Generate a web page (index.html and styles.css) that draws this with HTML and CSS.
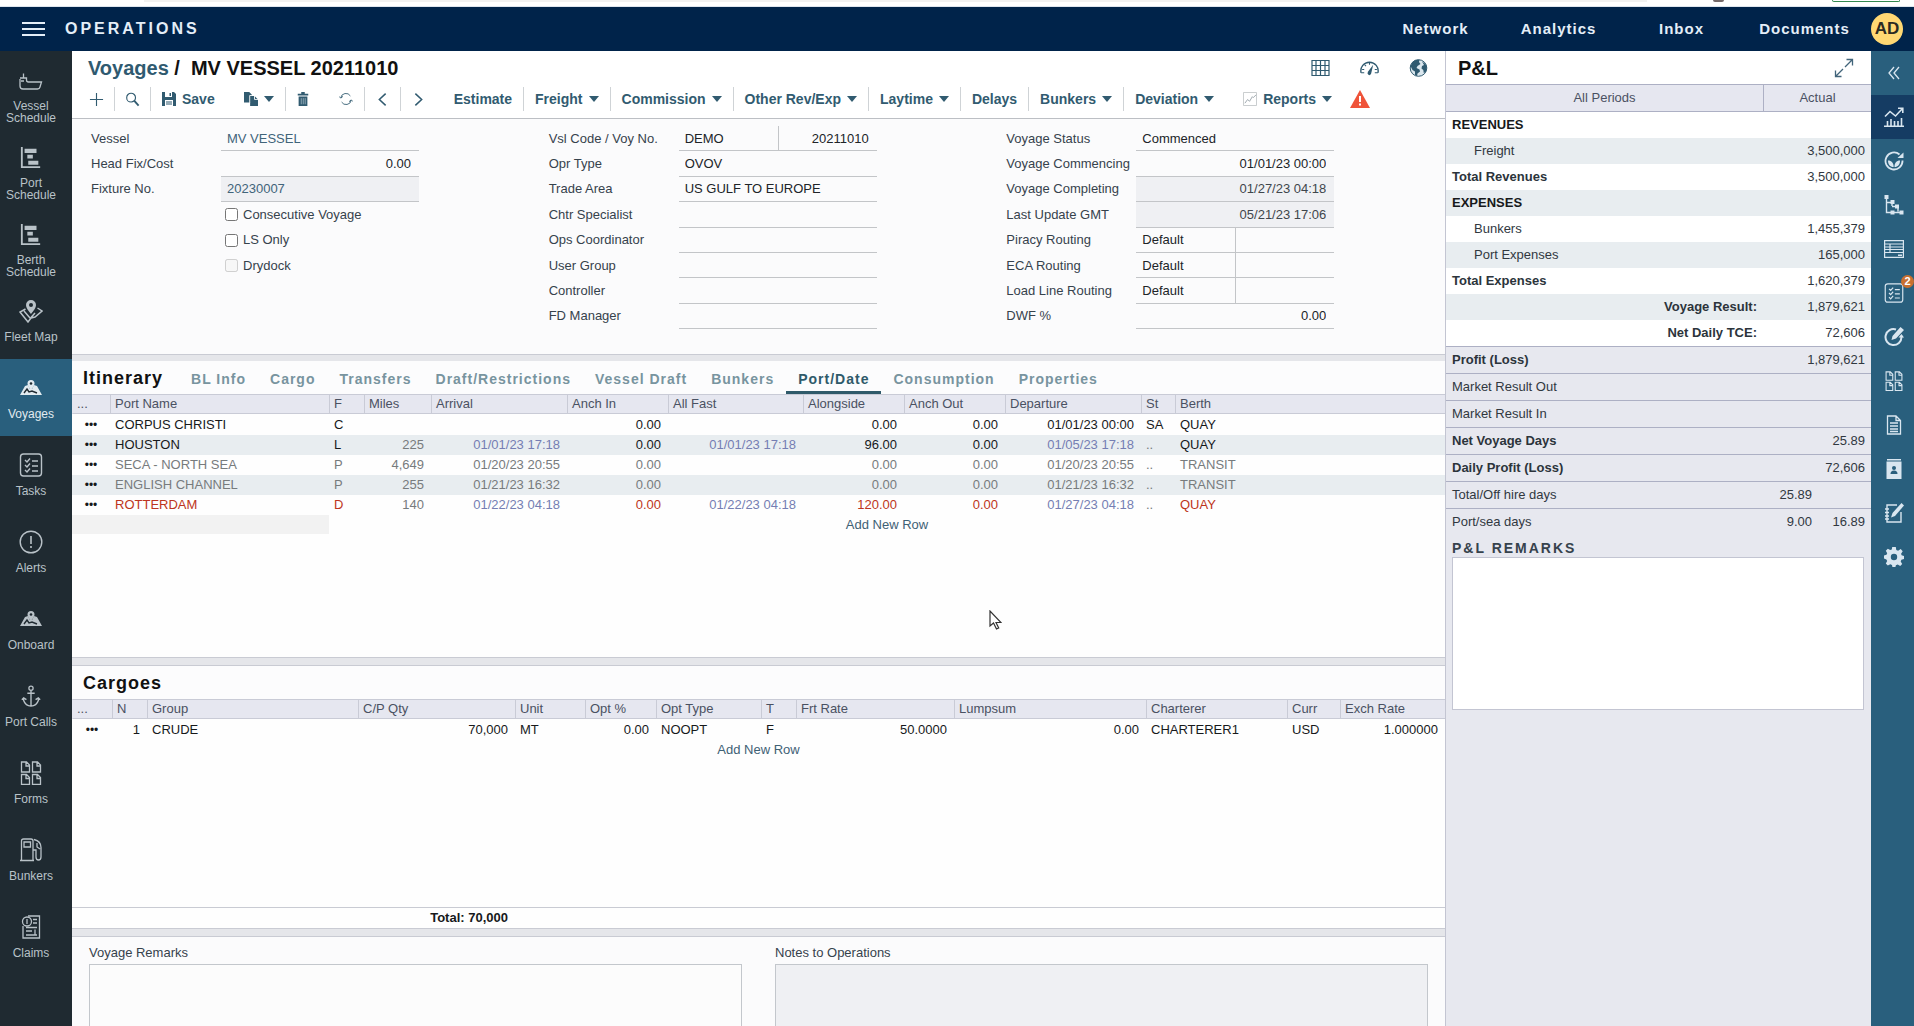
FILE: index.html
```html
<!DOCTYPE html>
<html lang="en">
<head>
<meta charset="utf-8">
<title>Operations</title>
<link rel="stylesheet" href="styles.css">
</head>
<body>
<svg class="sprite" aria-hidden="true">
  <symbol id="i-vessel" viewBox="0 0 24 24"><path d="M1 11V18q0 3 3 3h14.500q2 0 2.500-2l1.500-5H9.500q-2 0-2-2V10H1M4.500 10V5.500M2 13h3" fill="none" stroke="currentColor" stroke-width="1.300"/></symbol>
  <symbol id="i-gantt" viewBox="0 0 24 24"><path d="M1 1h2v21h19v2H1zM5 3h13v4.500H5zM8 9.500h6v4H8zM9 16h11v4.500H9z" fill="currentColor"/></symbol>
  <symbol id="i-map" viewBox="0 0 24 24"><path d="M12 1a5 5 0 0 1 5 5c0 3.500-5 9-5 9S7 9.500 7 6a5 5 0 0 1 5-5zm0 3a2 2 0 1 0 0 4 2 2 0 0 0 0-4z" fill="currentColor" fill-rule="evenodd"/><path d="M6.500 10L1 13l8 10 3-4 4-1 7-6-4.500-3M5 12l6 7M12 18.500L16 14" fill="none" stroke="currentColor" stroke-width="1.500"/></symbol>
  <symbol id="i-voyage" viewBox="0 0 24 24"><path d="M1 19L6 10l3-1 2 4h2l2-4 3 1 5 9z" fill="currentColor"/><path d="M12 4a3.500 3.500 0 0 1 3.500 3.500C15.500 10 12 14 12 14S8.500 10 8.500 7.500A3.500 3.500 0 0 1 12 4z" fill="currentColor"/><circle cx="12" cy="7.500" r="1.300" fill="#1f2a31"/><path d="M5 17l3-4 2 3 3-1 5 2" fill="none" stroke="#1f2a31" stroke-width="1.400"/></symbol>
  <symbol id="i-tasks" viewBox="0 0 24 24"><rect x="1.500" y="1" width="21" height="22" rx="3" fill="none" stroke="currentColor" stroke-width="1.400"/><path d="M6 7l2 2 3-3.500M13 8h6M6 12l2 2 3-3.500M13 13h6M6 17l2 2 3-3.500M13 18h6" fill="none" stroke="currentColor" stroke-width="1.400"/></symbol>
  <symbol id="i-alert" viewBox="0 0 24 24"><circle cx="12" cy="12" r="10.800" fill="none" stroke="currentColor" stroke-width="1.400"/><path d="M12 6v8M12 16v2" stroke="currentColor" stroke-width="1.600"/></symbol>
  <symbol id="i-anchor" viewBox="0 0 24 24"><path d="M12 6v17M8 9h8M4 14v3q2 6 8 6t8-6v-3M2 16l2-2 3 2M17 16l3-2 2 2" fill="none" stroke="currentColor" stroke-width="1.500"/><circle cx="12" cy="3.500" r="2.300" fill="none" stroke="currentColor" stroke-width="1.400"/></symbol>
  <symbol id="i-forms" viewBox="0 0 24 24"><path d="M2.500 1h5l3 3v7h-8zM13.500 1h5l3 3v7h-8zM2.500 13.500h5l3 3v7h-8zM13.500 13.500h5l3 3v7h-8zM7 1v4h3.500M18 1v4h3.500M7 13.500v4h3.500M18 13.500v4h3.500" fill="none" stroke="currentColor" stroke-width="1.300"/></symbol>
  <symbol id="i-fuel" viewBox="0 0 24 24"><path d="M2.500 22.500V3q0-2 2-2H12q2 0 2 2v19.500M1 22.500h14M5 4h6.500v5H5zM15 1.500c4 1 7 4 7 8V19q0 3-2.500 3T17 19v-7h-3M18 5v4l3 2" fill="none" stroke="currentColor" stroke-width="1.300"/></symbol>
  <symbol id="i-claims" viewBox="0 0 24 24"><path d="M9 1h11.500v22H4V11" fill="none" stroke="currentColor" stroke-width="1.300"/><circle cx="8" cy="6.500" r="4.500" fill="none" stroke="currentColor" stroke-width="1.300"/><path d="M8 4v5M14 4.500h4M14 8h4M7 12.500h11M7 16h6M7 20h11M16 14.500v5" fill="none" stroke="currentColor" stroke-width="1.300"/></symbol>
  <symbol id="i-plus" viewBox="0 0 16 16"><path d="M8 1v14M1 8h14" stroke="currentColor" stroke-width="1.200"/></symbol>
  <symbol id="i-search" viewBox="0 0 16 16"><circle cx="6.500" cy="6" r="4.700" fill="none" stroke="currentColor" stroke-width="1.200"/><path d="M10 9.500l4.500 5" stroke="currentColor" stroke-width="2"/></symbol>
  <symbol id="i-save" viewBox="0 0 14 14"><path d="M0 0h12l2 2v12H0z" fill="currentColor"/><path d="M3 0h7v5H3zM3 8h8v6H3z" fill="#fff"/><path d="M7.500 1h1.500v3H7.500zM4 9.500h6v1H4zM4 11.500h6v1H4z" fill="currentColor"/></symbol>
  <symbol id="i-copy" viewBox="0 0 16 16"><path d="M0 0h6l3 3v9H0zM7 4.500h5l4 4V16H7z" fill="currentColor"/><path d="M6.500 12.500V4h5.500v4.500h4" fill="none" stroke="#fff"/></symbol>
  <symbol id="i-trash" viewBox="0 0 14 16"><path d="M1 2h4V0h4v2h4v2H1zM2 5h10v11H2z" fill="currentColor"/><path d="M5 7v7M7.300 7v7M9.500 7v7" stroke="#9ab0bd" stroke-width="1"/></symbol>
  <symbol id="i-refresh" viewBox="0 0 16 16"><path d="M2 6.500a6 6 0 0 1 11-2M14 9.500a6 6 0 0 1-11 2M0 5l2 2 2.500-2M11.500 11l2.500-2 2 2" fill="none" stroke="currentColor" stroke-width="1"/></symbol>
  <symbol id="i-prev" viewBox="0 0 10 16"><path d="M8.500 1.500L1.500 8l7 6.500" fill="none" stroke="currentColor" stroke-width="1.700"/></symbol>
  <symbol id="i-next" viewBox="0 0 10 16"><path d="M1.500 1.500l7 6.500-7 6.500" fill="none" stroke="currentColor" stroke-width="1.700"/></symbol>
  <symbol id="i-report" viewBox="0 0 15 15"><path d="M.5.500h14v14H.5z" fill="none" stroke="#c4c8ca"/><path d="M2 12l3-4 2 2 3-5 1 1 3-3" fill="none" stroke="#9aa4aa"/></symbol>
  <symbol id="i-warn" viewBox="0 0 20 18"><path d="M10 0l10 18H0z" fill="#ef5339"/><path d="M10 6v6M10 13.500v2" stroke="#fff" stroke-width="2"/></symbol>
  <symbol id="i-grid" viewBox="0 0 18 18"><path d="M.5 1.500h17v15H.5zM.5 6.500h17M.5 11.500h17M4.500 1.500v15M9 1.500v15M13.500 1.500v15" fill="none" stroke="currentColor" stroke-width="1.200"/></symbol>
  <symbol id="i-gauge" viewBox="0 0 18 16"><path d="M1 12.500A8.200 8.200 0 1 1 17 12.500" fill="none" stroke="currentColor" stroke-width="1.300"/><path d="M12.500 5l-5 6.500q-1 2 .5 3t2.500-1z" fill="currentColor"/><path d="M2 9.500h2M4.500 5l1.200 1.200M9 3v2M16 9.500h-2M1 12.500h3M14 12.500h3" stroke="currentColor"/></symbol>
  <symbol id="i-globe" viewBox="0 0 18 18"><circle cx="9" cy="9" r="8.300" fill="#dbe7ee" stroke="currentColor"/><path d="M3 3Q6 0 10 .8L9.500 3 11 5 8 7 7 9l3 1.500.5 2L8 14.500 7.500 17 5.500 16V12.500L3 11 1 7zM12.500 2.500Q16 4 17.300 8l-1 5-2 1-.5-3L12 9.500 12.500 7l2-1z" fill="currentColor"/></symbol>
  <symbol id="i-expand" viewBox="0 0 20 20"><path d="M12.500 1.500h6v6M18 2l-7 7M7.500 18.500h-6v-6M2 18l7-7" fill="none" stroke="currentColor" stroke-width="1.300"/></symbol>
  <symbol id="i-collapse" viewBox="0 0 12 14"><path d="M6 1L1 7l5 6M11 1L6 7l5 6" fill="none" stroke="currentColor" stroke-width="1.300"/></symbol>
  <symbol id="i-chart" viewBox="0 0 20 20"><path d="M0 19.300h20M3.500 19v-5M7 19v-7M10.500 19v-5M14 19v-5M17.500 19v-8M1 9.500l5-5L11.500 9l7-7.500M14 1.200h4.800V6" fill="none" stroke="currentColor" stroke-width="1.600"/></symbol>
  <symbol id="i-eco" viewBox="0 0 20 20"><path d="M18.500 9.500A8.500 8.500 0 1 1 15.500 3.500" fill="none" stroke="currentColor" stroke-width="1.800"/><path d="M19.500 1.500v5.500h-6z" fill="currentColor"/><path d="M9.700 16C6 16 4 13.500 4 9.500c3.500 0 5.700 2.500 5.700 6.500zM10.500 16c0-4 2-6.500 5.500-6.500 0 4-2 6.500-5.500 6.500z" fill="currentColor"/></symbol>
  <symbol id="i-tree" viewBox="0 0 20 20"><path d="M2.500 2v15.500h6M2.500 7.500h6M8 7.500V11M8 11.500h6v5M8 17.500h9" fill="none" stroke="currentColor" stroke-width="1.400"/><path d="M.5 0h4v4h-4zM6.500 5h4v4h-4zM11 9.500h4v4h-4zM6.500 15.500h4v4h-4zM15.500 15.500h4v4h-4z" fill="currentColor"/></symbol>
  <symbol id="i-table" viewBox="0 0 20 18"><path d="M.6.6h18.800v16.800H.6zM.6 4h19M.6 7h19M.6 9.500h19M.6 12.500h19M6 4v8.500" fill="none" stroke="currentColor" stroke-width="1.200"/><path d="M14 14.500h4v1.500h-4z" fill="currentColor"/></symbol>
  <symbol id="i-compose" viewBox="0 0 20 20"><path d="M12 2.500A8 8 0 1 0 17.500 10" fill="none" stroke="currentColor" stroke-width="2"/><path d="M16.500 0L20 3l-8 8.500-4.500 1.500L8.500 9zM14.500 10.500L17.500 7l2.500 3.500z" fill="currentColor"/></symbol>
  <symbol id="i-doc" viewBox="0 0 16 20"><path d="M1.500 1h8.500l4.500 4.500V19h-13zM10 1v4.500h4.500M4 8h8M4 11h8M4 14h8M4 16.500h8" fill="none" stroke="currentColor" stroke-width="1.300"/></symbol>
  <symbol id="i-contact" viewBox="0 0 16 20"><path d="M1 0h14v1.500H1zM.5 2.500h15V20H.5z" fill="currentColor"/><circle cx="8" cy="9" r="2" fill="#295f7d"/><path d="M4.500 15q0-3.500 3.500-3.500t3.500 3.500z" fill="#295f7d"/></symbol>
  <symbol id="i-note" viewBox="0 0 20 20"><path d="M13 2H3v17h14V9M1 6h4M1 9.500h4M1 13h4M1 16h4" fill="none" stroke="currentColor" stroke-width="1.400"/><path d="M17.500 0L20 2.500 11 13l-4 1.500L8.500 10z" fill="currentColor"/></symbol>
  <symbol id="i-gear" viewBox="0 0 20 20"><path d="M8.200 0h3.600l.5 3 1.800.8L16.700 2l2 2.300-1.600 2.500.5 1.500L20 9v3l-2.600.8-.7 1.600 1.500 2.600-2 2-2.500-1.500-1.800.7-.6 2.300H8.500L8 18l-1.700-.7L3.800 18.500l-2-2 1.400-2.500-.8-1.600L0 11.600V8.500l2.500-.7.7-1.600L1.800 3.800l2-2L6.200 3 7.800 2.500zM10 6.800a3.200 3.200 0 1 0 0 6.400 3.200 3.200 0 0 0 0-6.400z" fill="currentColor" fill-rule="evenodd"/></symbol>
</svg>

<div class="chrome"><span class="chrome-bar"></span><span class="chrome-dot"></span><span class="chrome-pill"></span></div>

<header class="topbar">
  <button class="menu" aria-label="Menu"><span></span><span></span><span></span></button>
  <h1>OPERATIONS</h1>
  <nav class="topnav">
    <a href="#">Network</a><a href="#">Analytics</a><a href="#">Inbox</a><a href="#">Documents</a>
  </nav>
  <button class="avatar">AD</button>
</header>

<div class="app">
  <nav class="sidebar">
    <a href="#"><svg><use href="#i-vessel"/></svg>Vessel Schedule</a>
    <a href="#"><svg class="sm"><use href="#i-gantt"/></svg>Port Schedule</a>
    <a href="#"><svg class="sm"><use href="#i-gantt"/></svg>Berth Schedule</a>
    <a href="#"><svg><use href="#i-map"/></svg>Fleet Map</a>
    <a href="#" class="active"><svg><use href="#i-voyage"/></svg>Voyages</a>
    <a href="#"><svg><use href="#i-tasks"/></svg>Tasks</a>
    <a href="#"><svg><use href="#i-alert"/></svg>Alerts</a>
    <a href="#"><svg><use href="#i-voyage"/></svg>Onboard</a>
    <a href="#"><svg class="sm"><use href="#i-anchor"/></svg>Port Calls</a>
    <a href="#"><svg><use href="#i-forms"/></svg>Forms</a>
    <a href="#"><svg><use href="#i-fuel"/></svg>Bunkers</a>
    <a href="#"><svg><use href="#i-claims"/></svg>Claims</a>
  </nav>

  <main>
    <div class="page-head">
      <h2><a href="#">Voyages</a> /<span>MV VESSEL 20211010</span></h2>
      <div class="head-icons">
        <button aria-label="Grid"><svg><use href="#i-grid"/></svg></button>
        <button aria-label="Gauge"><svg><use href="#i-gauge"/></svg></button>
        <button aria-label="Globe"><svg><use href="#i-globe"/></svg></button>
      </div>
    </div>
    <div class="toolbar">
      <div class="group">
        <button class="icon" aria-label="Add"><svg><use href="#i-plus"/></svg></button>
        <button class="icon" aria-label="Search"><svg><use href="#i-search"/></svg></button>
        <button><svg class="w14"><use href="#i-save"/></svg>Save</button>
      </div>
      <div class="group">
        <button class="caret" aria-label="Copy"><svg class="w14"><use href="#i-copy"/></svg></button>
        <button class="icon" aria-label="Delete"><svg class="w14"><use href="#i-trash"/></svg></button>
      </div>
      <div class="group">
        <button class="icon" aria-label="Refresh"><svg class="w14"><use href="#i-refresh"/></svg></button>
        <button class="icon" aria-label="Previous"><svg class="w10"><use href="#i-prev"/></svg></button>
        <button class="icon" aria-label="Next"><svg class="w10"><use href="#i-next"/></svg></button>
      </div>
      <div class="group">
        <button>Estimate</button>
        <button class="caret">Freight</button>
        <button class="caret">Commission</button>
        <button class="caret">Other Rev/Exp</button>
        <button class="caret">Laytime</button>
        <button>Delays</button>
        <button class="caret">Bunkers</button>
        <button class="caret">Deviation</button>
      </div>
      <div class="group">
        <button class="caret"><svg class="w14"><use href="#i-report"/></svg>Reports</button>
      </div>
      <button class="warn" aria-label="Warnings"><svg><use href="#i-warn"/></svg></button>
    </div>

    <form class="voyage">
      <div class="col">
        <div class="row"><label for="vessel">Vessel</label><input id="vessel" class="link" value="MV VESSEL"></div>
        <div class="row"><label for="head">Head Fix/Cost</label><input id="head" class="num" value="0.00"></div>
        <div class="row"><label for="fix">Fixture No.</label><input id="fix" class="ro link" readonly value="20230007"></div>
        <div class="row check"><input type="checkbox" id="cons"><label for="cons">Consecutive Voyage</label></div>
        <div class="row check"><input type="checkbox" id="ls"><label for="ls">LS Only</label></div>
        <div class="row check"><input type="checkbox" id="dry" disabled><label for="dry">Drydock</label></div>
      </div>
      <div class="col">
        <div class="row split"><label for="code">Vsl Code / Voy No.</label><input id="code" value="DEMO"><input aria-label="Voyage number" class="num" value="20211010"></div>
        <div class="row"><label for="opr">Opr Type</label><input id="opr" value="OVOV"></div>
        <div class="row"><label for="trade">Trade Area</label><input id="trade" value="US GULF TO EUROPE"></div>
        <div class="row"><label for="chtr">Chtr Specialist</label><input id="chtr"></div>
        <div class="row"><label for="ops">Ops Coordinator</label><input id="ops"></div>
        <div class="row"><label for="ug">User Group</label><input id="ug"></div>
        <div class="row"><label for="ctl">Controller</label><input id="ctl"></div>
        <div class="row"><label for="fd">FD Manager</label><input id="fd"></div>
      </div>
      <div class="col">
        <div class="row"><label for="st">Voyage Status</label><input id="st" value="Commenced"></div>
        <div class="row"><label for="vc">Voyage Commencing</label><input id="vc" class="num" value="01/01/23 00:00"></div>
        <div class="row"><label for="vp">Voyage Completing</label><input id="vp" class="num ro" readonly value="01/27/23 04:18"></div>
        <div class="row"><label for="lu">Last Update GMT</label><input id="lu" class="num ro" readonly value="05/21/23 17:06"></div>
        <div class="row split"><label for="pr">Piracy Routing</label><input id="pr" value="Default"><input aria-label="Piracy routing date"></div>
        <div class="row split"><label for="ec">ECA Routing</label><input id="ec" value="Default"><input aria-label="ECA routing date"></div>
        <div class="row split"><label for="ll">Load Line Routing</label><input id="ll" value="Default"><input aria-label="Load line routing date"></div>
        <div class="row"><label for="dwf">DWF %</label><input id="dwf" class="num" value="0.00"></div>
      </div>
    </form>
    <div class="splitter slim"></div>

    <section class="pane itinerary">
      <div class="pane-head">
        <h3>Itinerary</h3>
        <nav class="tabs">
          <a href="#">BL Info</a><a href="#">Cargo</a><a href="#">Transfers</a><a href="#">Draft/Restrictions</a><a href="#">Vessel Draft</a><a href="#">Bunkers</a><a href="#" class="on">Port/Date</a><a href="#">Consumption</a><a href="#">Properties</a>
        </nav>
      </div>
      <table class="grid">
        <colgroup><col class="c38"><col class="c219"><col class="c35"><col class="c67"><col class="c136"><col class="c101"><col class="c135"><col class="c101"><col class="c101"><col class="c136"><col class="c34"><col></colgroup>
        <thead><tr><th>...</th><th>Port Name</th><th>F</th><th>Miles</th><th>Arrival</th><th>Anch In</th><th>All Fast</th><th>Alongside</th><th>Anch Out</th><th>Departure</th><th>St</th><th>Berth</th></tr></thead>
        <tbody>
          <tr><td><button class="dots">•••</button></td><td>CORPUS CHRISTI</td><td>C</td><td class="r"></td><td class="r"></td><td class="r">0.00</td><td class="r"></td><td class="r">0.00</td><td class="r">0.00</td><td class="r">01/01/23 00:00</td><td>SA</td><td>QUAY</td></tr>
          <tr><td><button class="dots">•••</button></td><td>HOUSTON</td><td>L</td><td class="r dim">225</td><td class="r est">01/01/23 17:18</td><td class="r">0.00</td><td class="r est">01/01/23 17:18</td><td class="r">96.00</td><td class="r">0.00</td><td class="r est">01/05/23 17:18</td><td class="dim">..</td><td>QUAY</td></tr>
          <tr class="transit"><td><button class="dots">•••</button></td><td>SECA - NORTH SEA</td><td>P</td><td class="r">4,649</td><td class="r">01/20/23 20:55</td><td class="r">0.00</td><td class="r"></td><td class="r">0.00</td><td class="r">0.00</td><td class="r">01/20/23 20:55</td><td>..</td><td>TRANSIT</td></tr>
          <tr class="transit"><td><button class="dots">•••</button></td><td>ENGLISH CHANNEL</td><td>P</td><td class="r">255</td><td class="r">01/21/23 16:32</td><td class="r">0.00</td><td class="r"></td><td class="r">0.00</td><td class="r">0.00</td><td class="r">01/21/23 16:32</td><td>..</td><td>TRANSIT</td></tr>
          <tr class="late"><td><button class="dots">•••</button></td><td>ROTTERDAM</td><td>D</td><td class="r dim">140</td><td class="r est">01/22/23 04:18</td><td class="r">0.00</td><td class="r est">01/22/23 04:18</td><td class="r">120.00</td><td class="r">0.00</td><td class="r est">01/27/23 04:18</td><td class="dim">..</td><td>QUAY</td></tr>
          <tr class="add"><td colspan="2" class="frozen"></td><td colspan="10"><button>Add New Row</button></td></tr>
        </tbody>
      </table>
      <svg class="cursor" viewBox="0 0 13 20"><path d="M1 1v15l3.500-3 3 6 2.200-1-2.700-5.500H12z" fill="#fff" stroke="#333" stroke-width="1.200"/></svg>
    </section>
    <div class="splitter"></div>

    <section class="pane cargoes">
      <div class="pane-head"><h3>Cargoes</h3></div>
      <table class="grid">
        <colgroup><col class="c40"><col class="c35"><col class="c211"><col class="c157"><col class="c70"><col class="c71"><col class="c105"><col class="c35"><col class="c158"><col class="c192"><col class="c141"><col class="c53"><col></colgroup>
        <thead><tr><th>...</th><th>N</th><th>Group</th><th>C/P Qty</th><th>Unit</th><th>Opt %</th><th>Opt Type</th><th>T</th><th>Frt Rate</th><th>Lumpsum</th><th>Charterer</th><th>Curr</th><th>Exch Rate</th></tr></thead>
        <tbody>
          <tr><td><button class="dots">•••</button></td><td class="r">1</td><td>CRUDE</td><td class="r">70,000</td><td>MT</td><td class="r">0.00</td><td>NOOPT</td><td>F</td><td class="r">50.0000</td><td class="r">0.00</td><td>CHARTERER1</td><td>USD</td><td class="r">1.000000</td></tr>
          <tr class="add"><td colspan="13"><button>Add New Row</button></td></tr>
        </tbody>
      </table>
      <div class="totals"><span>Total: 70,000</span></div>
    </section>
    <div class="splitter"></div>

    <section class="remarks">
      <div><label for="vr">Voyage Remarks</label><textarea id="vr"></textarea></div>
      <div><label for="no">Notes to Operations</label><textarea id="no" class="ro" readonly></textarea></div>
    </section>
  </main>

  <aside class="pl">
    <div class="pl-head"><h2>P&amp;L</h2><button aria-label="Expand"><svg><use href="#i-expand"/></svg></button></div>
    <table class="pl-table">
      <colgroup><col><col class="c108"></colgroup>
      <thead><tr><th>All Periods</th><th>Actual</th></tr></thead>
      <tbody>
        <tr><td class="b dark">REVENUES</td><td></td></tr>
        <tr><td class="in">Freight</td><td>3,500,000</td></tr>
        <tr><td class="b">Total Revenues</td><td>3,500,000</td></tr>
        <tr><td class="b dark">EXPENSES</td><td></td></tr>
        <tr><td class="in">Bunkers</td><td>1,455,379</td></tr>
        <tr><td class="in">Port Expenses</td><td>165,000</td></tr>
        <tr><td class="b">Total Expenses</td><td>1,620,379</td></tr>
        <tr><td class="b end">Voyage Result:</td><td>1,879,621</td></tr>
        <tr><td class="b end">Net Daily TCE:</td><td>72,606</td></tr>
      </tbody>
    </table>
    <table class="pl-sum">
      <colgroup><col><col class="c70"><col class="c53"></colgroup>
      <tbody>
        <tr><td class="b">Profit (Loss)</td><td colspan="2">1,879,621</td></tr>
        <tr><td>Market Result Out</td><td colspan="2"></td></tr>
        <tr><td>Market Result In</td><td colspan="2"></td></tr>
        <tr><td class="b">Net Voyage Days</td><td colspan="2">25.89</td></tr>
        <tr><td class="b">Daily Profit (Loss)</td><td colspan="2">72,606</td></tr>
        <tr><td>Total/Off hire days</td><td>25.89</td><td></td></tr>
        <tr><td>Port/sea days</td><td>9.00</td><td>16.89</td></tr>
      </tbody>
    </table>
    <div class="pl-remarks"><label for="plr">P&amp;L REMARKS</label><textarea id="plr"></textarea></div>
  </aside>

  <nav class="rail">
    <button aria-label="Collapse"><svg class="tiny"><use href="#i-collapse"/></svg></button>
    <button aria-label="P&amp;L" class="active"><svg><use href="#i-chart"/></svg></button>
    <button aria-label="Emissions"><svg><use href="#i-eco"/></svg></button>
    <button aria-label="Related objects"><svg><use href="#i-tree"/></svg></button>
    <button aria-label="Invoices"><svg><use href="#i-table"/></svg></button>
    <button aria-label="Tasks"><svg><use href="#i-tasks"/></svg><span class="badge">2</span></button>
    <button aria-label="Revisions"><svg><use href="#i-compose"/></svg></button>
    <button aria-label="Forms"><svg><use href="#i-forms"/></svg></button>
    <button aria-label="Documents"><svg><use href="#i-doc"/></svg></button>
    <button aria-label="Contacts"><svg><use href="#i-contact"/></svg></button>
    <button aria-label="Notes"><svg><use href="#i-note"/></svg></button>
    <button aria-label="Settings"><svg><use href="#i-gear"/></svg></button>
  </nav>
</div>
</body>
</html>
```
FILE: styles.css
```css
* { box-sizing: border-box; }
body {
  margin: 0;
  height: 100vh;
  overflow: hidden;
  display: flex;
  flex-direction: column;
  font: 13px/16px "Liberation Sans", Arial, sans-serif;
  color: #36424c;
  background: #fff;
}
h1, h2, h3 { margin: 0; }
a { color: inherit; text-decoration: none; }
button { border: 0; padding: 0; margin: 0; background: none; font: inherit; color: inherit; }
input, textarea { font: inherit; color: #202428; border: 0; margin: 0; border-radius: 0; outline: 0; resize: none; }
svg { display: block; flex: none; }
.sprite { position: absolute; width: 0; height: 0; }

/* browser edge */
.chrome { flex: none; display: flex; align-items: flex-start; height: 7px; padding: 0 14px 0 144px; border-bottom: 1px solid #dfe6ee; }
.chrome-bar { flex: 1; height: 2px; background: #f2f2f1; }
.chrome-dot { width: 11px; height: 2px; margin: 0 108px 0 66px; background: #756a6a; border-radius: 0 0 3px 3px; }
.chrome-pill { width: 68px; height: 2px; border: 1px solid #34894f; border-top: 0; border-radius: 0 0 8px 8px; }

/* top bar */
.topbar { flex: none; display: flex; align-items: center; height: 44px; padding: 0 11px 0 22px; background: #00234a; color: #e4eef8; }
.menu { display: grid; gap: 4px; width: 23px; margin-right: 20px; }
.menu span { height: 2px; background: #e4eef8; }
.topbar h1 { font-size: 16px; letter-spacing: 3px; }
.topnav { display: flex; margin-left: auto; font-size: 15px; font-weight: bold; letter-spacing: 1px; }
.topnav a { width: 123px; text-align: center; }
.avatar { width: 32px; height: 32px; margin-left: 5px; border-radius: 50%; background: #ffd873; color: #2b2a22; font-size: 17px; font-weight: bold; }

.app { flex: 1; min-height: 0; display: flex; }

/* left navigation */
.sidebar { flex: none; width: 72px; background: #1f2a31; color: #b9c2c8; font-size: 12px; line-height: 12px; }
.sidebar a { display: flex; flex-direction: column; align-items: center; gap: 8px; height: 77px; padding: 17px 10px 0 0; text-align: center; }
.sidebar svg { width: 24px; height: 24px; }
.sidebar svg.sm { padding: 1px; }
.sidebar .active { background: #295f7d; color: #e2ebf0; }

main { flex: 1; min-width: 0; display: flex; flex-direction: column; border-right: 1px solid #c3c5d2; }

/* title and toolbar */
.page-head { flex: none; display: flex; align-items: center; height: 33px; padding: 0 17px 0 16px; }
.page-head h2, .pl-head h2 { font-size: 20px; line-height: 24px; color: #111; }
.page-head h2 a { color: #2f5a70; }
.page-head h2 span { margin-left: 11px; }
.head-icons { display: flex; gap: 30px; margin-left: auto; color: #2f5a70; }
.head-icons svg { width: 19px; height: 18px; }
.toolbar { flex: none; display: flex; align-items: center; gap: 7px; height: 35px; padding: 0 0 4px 6px; border-bottom: 1px solid #bcbfc4; color: #315b70; font-size: 14px; font-weight: bold; }
.group { display: flex; }
.group button { display: flex; align-items: center; gap: 6px; height: 24px; padding: 0 11px; white-space: nowrap; }
.group button + button { border-left: 1px solid #cfd3d6; }
.group .icon { width: 36px; padding: 0; justify-content: center; }
.group svg { width: 15px; height: 15px; }
.group svg.w10 { width: 9px; }
.group svg.w14 { width: 14px; height: 14px; }
.caret::after { content: ""; border: 5px solid transparent; border-top: 6px solid #315b70; border-bottom: 0; }
.warn svg { width: 20px; height: 18px; }

/* voyage form */
.voyage { flex: none; display: grid; grid-template-columns: repeat(3, 1fr); height: 235px; padding: 7px 0 25px; background: #fbfbfc; }
.col { display: grid; grid-template-rows: repeat(8, 1fr); padding-left: 19px; }
.row { display: grid; grid-template-columns: 130px 198px; align-items: center; }
.row.split { grid-template-columns: 130px 99px 99px; }
.row input { width: 100%; height: 100%; min-width: 0; padding: 0 8px 0 6px; background: none; border-bottom: 1px solid #c3c5c8; }
.row.split input:last-child { border-left: 1px solid #c3c5c8; }
.row .num { text-align: right; }
.row .ro { background: #eff0f3; color: #3f464c; }
.row .link { color: #41647a; }
.row.check { display: flex; gap: 5px; padding-left: 134px; }
.row.check input { width: 13px; height: 13px; }

.splitter { flex: none; height: 9px; background: #e5e6ea; border: 1px solid #c9cbd3; border-width: 1px 0; }
.splitter.slim { height: 7px; border-bottom: 0; }

/* data panes */
.pane { position: relative; display: flex; flex-direction: column; min-height: 0; background: #fefefe; }
.itinerary { flex: 296 1 0; }
.cargoes { flex: 262 1 0; }
.pane-head { flex: none; display: flex; align-items: stretch; height: 33px; padding-left: 11px; background: #fcfcfd; }
.pane-head h3 { align-self: center; font-size: 18px; line-height: 22px; letter-spacing: 1px; color: #111; }
.tabs { display: flex; margin-left: 16px; color: #78949f; font-size: 14px; font-weight: bold; letter-spacing: 1px; }
.tabs a { padding: 10px 12px 0; border-bottom: 3px solid transparent; }
.tabs .on { color: #2f5a6a; border-color: #2f5a6a; }
.grid, .pl-table, .pl-sum { width: 100%; table-layout: fixed; border-collapse: separate; border-spacing: 0; }
.grid th { height: 20px; padding: 0 4px; border: 1px solid #c9cbd6; border-width: 1px 0 1px 1px; background: #e6e7f0; color: #4a5162; font-weight: normal; text-align: left; line-height: 16px; }
.grid th:first-child { border-left-color: #e6e7f0; }
.grid td { height: 20px; padding: 0 5px; color: #17191b; white-space: nowrap; line-height: 16px; }
.grid tr:first-child td { height: 21px; }
.grid tr:nth-child(even) td { background: #e8edf0; }
.grid td.r { text-align: right; padding-right: 7px; }
.grid .dots { width: 100%; text-align: center; color: #17191b; font-size: 12px; }
.grid td.dim, .grid .transit td { color: #777b7d; }
.grid .late td { color: #bd3520; }
.grid td.est, .grid .late td.est { color: #757eb3; }
.grid .late td.dim { color: #777b7d; }
.grid tr.add td { height: 19px; background: none; text-align: center; color: #3f6175; }
.grid tr.add td.frozen { background: #f2f2f2; }
.cursor { position: absolute; left: 917px; top: 249px; width: 13px; height: 20px; }
.totals { flex: none; height: 21px; margin-top: auto; border-top: 1px solid #c9cbd3; color: #17191b; font-weight: bold; line-height: 20px; }
.totals span { display: block; width: 436px; text-align: right; }

.c34 { width: 34px; } .c35 { width: 35px; } .c38 { width: 38px; } .c40 { width: 40px; } .c53 { width: 53px; }
.c67 { width: 67px; } .c70 { width: 70px; } .c71 { width: 71px; } .c101 { width: 101px; }
.c105 { width: 105px; } .c108 { width: 108px; } .c135 { width: 135px; } .c136 { width: 136px; }
.c141 { width: 141px; } .c157 { width: 157px; } .c158 { width: 158px; } .c192 { width: 192px; }
.c211 { width: 211px; } .c219 { width: 219px; }

.remarks { flex: 81 1 0; min-height: 0; overflow: hidden; display: grid; grid-template-columns: 1fr 1fr; gap: 33px; padding: 8px 17px 0; background: #fbfbfc; }
.remarks label { display: block; margin-bottom: 3px; }
.remarks textarea { display: block; width: 100%; height: 120px; background: #fcfcfc; border: 1px solid #c3c7cc; }
.remarks textarea.ro { background: #eff0f3; }

/* profit and loss */
.pl { flex: none; width: 425px; background: #e7e8ef; }
.pl-head { display: flex; align-items: center; justify-content: space-between; height: 33px; padding: 0 17px 0 12px; background: #fff; color: #41647a; }
.pl-head svg { width: 20px; height: 20px; }
.pl-table th { height: 28px; padding: 0; border: 1px solid #adb0c4; border-width: 1px 0; background: #e6e7f0; color: #4a5162; font-weight: normal; }
.pl-table th + th { border-left-width: 1px; }
.pl-table td { height: 26px; padding: 0 6px; background: #fff; }
.pl-table tr:nth-child(even) td { background: #e8edf0; }
.pl td { text-align: right; color: #31383f; }
.pl td:first-child { text-align: left; }
.pl td.b { font-weight: bold; color: #2c343b; }
.pl td.dark { color: #17191b; }
.pl td.in:first-child { padding-left: 28px; }
.pl td.end:first-child { text-align: right; }
.pl-sum td { height: 27px; padding: 0 6px; border-top: 1px solid #adb0c4; }
.pl-remarks { padding: 4px 7px 0 6px; }
.pl-remarks label { display: block; font-size: 14px; font-weight: bold; letter-spacing: 2px; line-height: 18px; }
.pl-remarks textarea { display: block; width: 100%; height: 153px; background: #fff; border: 1px solid #c3c5d2; }

/* right rail */
.rail { flex: none; width: 43px; background: #295f7d; color: #d9e6f0; }
.rail button { position: relative; display: grid; place-items: center; width: 100%; height: 44px; padding-left: 2px; }
.rail .active { background: #153c63; }
.rail svg { width: 20px; height: 20px; }
.rail svg.tiny { width: 12px; height: 14px; }
.badge { position: absolute; right: 0; top: 4px; width: 13px; height: 13px; border-radius: 50%; background: #c9702f; color: #fff; font-size: 11px; font-weight: bold; line-height: 13px; }
```
